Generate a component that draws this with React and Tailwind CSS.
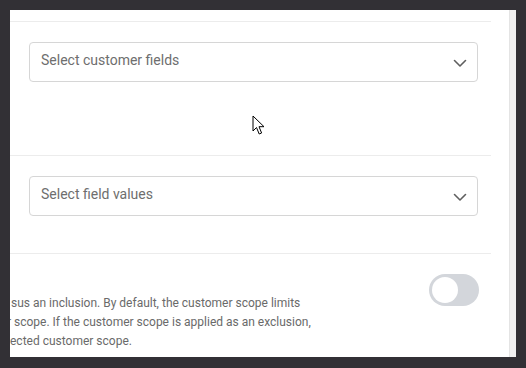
const Chevron = () => (
  <svg width="14" height="14" viewBox="0 0 14 14" fill="none" className="text-[#5f5f5f]">
    <path d="M1.5 4.5L7 10L12.5 4.5" stroke="currentColor" strokeWidth="1.6" strokeLinecap="round" strokeLinejoin="round" />
  </svg>
);

const SelectBox = ({ placeholder }) => (
  <div className="ml-[19px] w-[449px] h-[40px] rounded-[4px] border border-[#d6d6d6] bg-white flex items-center justify-between pl-[11px] pr-[10px]">
    <span className="text-[14px] text-[#6e6e6e] -mt-[3px]">{placeholder}</span>
    <span className="mt-[2px]">
      <Chevron />
    </span>
  </div>
);

const Cursor = () => (
  <svg width="14" height="21" viewBox="0 0 14 21" className="absolute left-[242px] top-[105px]">
    <path d="M1 1L1 16L4.5 12.5L7.2 19L9.6 18L7 11.7L12 11.7Z" fill="white" stroke="black" strokeWidth="1" strokeLinejoin="round" />
  </svg>
);

export default function App() {
  return (
    <div className="w-[526px] h-[368px] bg-[#323035] p-[10px] font-['Roboto',sans-serif]">
      <div className="relative flex w-[506px] h-[347px] overflow-hidden">
        <div className="flex-1 bg-white flex flex-col">
          <div className="h-[11px]" />
          <div className="h-px w-[481px] bg-[#ececec]" />
          <div className="pt-[20px] h-[133px]">
            <SelectBox placeholder="Select customer fields" />
          </div>
          <div className="h-px w-[481px] bg-[#ececec]" />
          <div className="pt-[20px] h-[97px]">
            <SelectBox placeholder="Select field values" />
          </div>
          <div className="h-px w-[481px] bg-[#ececec]" />
          <div className="flex pt-[20px]">
            <div className="flex-1 pt-[20px] text-[12px] leading-[19px] text-[#6a6a6a] whitespace-nowrap">
              <div className="ml-[1px]">sus an inclusion. By default, the customer scope limits</div>
              <div className="-ml-[3px]">r scope. If the customer scope is applied as an exclusion,</div>
              <div className="ml-0">ected customer scope.</div>
            </div>
            <div className="mr-[30px] w-[50px] h-[32px] rounded-full bg-[#d3d6db] p-[3px] flex items-start">
              <div className="w-[26px] h-[26px] rounded-full bg-white" />
            </div>
          </div>
        </div>
        <div className="w-[7px] bg-[#f1f1f1] border-l border-[#e4e4e4]" />
        <Cursor />
      </div>
    </div>
  );
}
